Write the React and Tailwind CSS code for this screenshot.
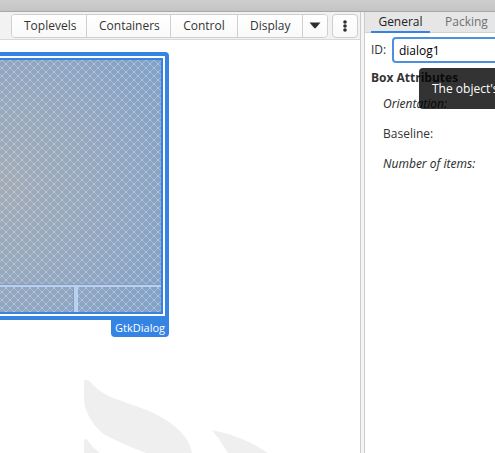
import React from "react";

const toolButton =
  "h-full border-r border-[#d0d0d0] px-3 text-[12px] leading-4 text-[#333] bg-linear-to-b from-white to-[#f9f9f9]";

function Toolbar() {
  return (
    <div className="flex h-7 shrink-0 items-center justify-end gap-1 border-b border-[#d9d9d9] bg-[#f2f2f2] pr-[2px]">
      <div className="flex h-6 overflow-hidden rounded-[4px] border border-[#cfcfcf]">
        <button className={toolButton + " w-[75px]"}>Toplevels</button>
        <button className={toolButton + " w-[84px]"}>Containers</button>
        <button className={toolButton + " w-[67px]"}>Control</button>
        <button className={toolButton + " w-[65px]"}>Display</button>
        <button
          aria-label="More categories"
          className="flex w-6 items-center justify-center bg-linear-to-b from-white to-[#f9f9f9]"
        >
          <svg width="12" height="7" viewBox="0 0 12 7">
            <path d="M0.5 0.5h11L7 5.7q-1 1-2 0z" fill="#2e2e2e" />
          </svg>
        </button>
      </div>
      <button
        aria-label="Menu"
        className="flex h-6 w-[26px] items-center justify-center rounded-[4px] border border-[#cfcfcf] bg-linear-to-b from-white to-[#f9f9f9]"
      >
        <svg width="4" height="12" viewBox="0 0 4 12" fill="#2e2e2e">
          <circle cx="2" cy="2" r="1.8" />
          <circle cx="2" cy="6" r="1.8" />
          <circle cx="2" cy="10" r="1.8" />
        </svg>
      </button>
    </div>
  );
}

function Hatch() {
  return (
    <svg className="block h-full w-full" aria-hidden="true">
      <defs>
        <radialGradient id="glow" gradientUnits="userSpaceOnUse" cx="0" cy="125" r="210">
          <stop offset="0" stopColor="#a5abb3" />
          <stop offset="0.5" stopColor="#95a7be" />
          <stop offset="1" stopColor="#82a0c8" />
        </radialGradient>
        <pattern id="hatch" width="8" height="8" patternUnits="userSpaceOnUse" x="2" y="0">
          <path
            d="M-1 -1L9 9M9 -1L-1 9"
            stroke="#c4daf0"
            strokeOpacity="0.46"
            strokeWidth="1"
          />
          <path d="M3 3h2v2h-2zM-1 -1h2v2h-2zM7 -1h2v2h-2zM-1 7h2v2h-2zM7 7h2v2h-2z" fill="#c4daf0" fillOpacity="0.25" />
        </pattern>
      </defs>
      <rect width="100%" height="100%" fill="url(#glow)" />
      <rect width="100%" height="100%" fill="url(#hatch)" />
    </svg>
  );
}

function Canvas() {
  return (
    <div className="relative min-h-0 flex-1 overflow-hidden bg-white pt-3">
      <div className="w-[169px] rounded-tr-[4px] bg-[#3584e4] py-1 pr-1">
        <div className="bg-white py-[2px] pr-[2px]">
          <div className="border-y-2 border-r-2 border-[#3584e4]">
            <div className="relative h-[252px]">
              <Hatch />
              <div className="absolute inset-x-0 bottom-0 flex h-7 flex-col">
                <div className="h-[3px] border-t border-[#849dbc] bg-[#b9d1f0]" />
                <div className="flex flex-1">
                  <div className="w-[73px]" />
                  <div className="w-[5px] border-l border-[#849dbc] bg-[#b9d1f0]" />
                </div>
              </div>
            </div>
          </div>
        </div>
      </div>
      <div className="flex w-[169px] justify-end">
        <span className="h-[17px] rounded-b-[4px] bg-[#3584e4] px-1 text-[11px] leading-4 text-white">
          GtkDialog
        </span>
      </div>
      <svg
        className="absolute bottom-0 left-[60px]"
        width="260"
        height="93"
        viewBox="0 0 260 93"
        fill="#efefef"
        aria-hidden="true"
      >
        <path d="M24 21Q24 19 26 20Q30 20 32 24Q40 33 56 39L84 49C110 59 130 76 132 93H86C70 87 57 81 45 75Q33 67 26 50Q24 45 24 35Z" />
        <path d="M24 93V82Q25 76 28 81Q32 87 40 93Z" />
        <path d="M152 70Q183 76 208 93H168Q161 81 152 70Z" />
      </svg>
    </div>
  );
}

function Inspector() {
  return (
    <aside className="relative w-[130px] shrink-0 overflow-hidden bg-white">
      <nav className="flex h-[21px] border-b border-[#d2d2d2] bg-[#e6e6e6] pl-[6px] whitespace-nowrap">
        <button className="h-[21px] w-[59px] shrink-0 border-b-2 border-[#3584e4] text-[12px] leading-4 text-[#222]">
          General
        </button>
        <button className="ml-[15px] h-[21px] shrink-0 pb-[2px] text-[12px] leading-4 text-[#707070]">
          Packing
        </button>
      </nav>
      <div className="flex h-[34px] items-center pl-[6px]">
        <label htmlFor="object-id" className="w-[21px] shrink-0">
          ID:
        </label>
        <input
          id="object-id"
          defaultValue="dialog1"
          className="h-[26px] w-[200px] shrink-0 rounded-[4px] border-2 border-[#4d8fe0] bg-white px-[5px] text-black outline-none"
        />
      </div>
      <div className="pl-[6px]">
        <h2 className="h-5 leading-[22px] font-bold">Box Attributes</h2>
        <div className="pl-3 whitespace-nowrap">
          <p className="h-[30px] font-['Noto_Sans',sans-serif] leading-[34px] italic">Orientation:</p>
          <p className="h-[30px] leading-[34px]">Baseline:</p>
          <p className="h-[30px] font-['Noto_Sans',sans-serif] leading-[34px] italic">Number of items:</p>
        </div>
      </div>
      <div
        role="tooltip"
        className="absolute top-14 left-[54px] h-[41px] w-[240px] rounded-[4px] bg-black/80 px-[13px] leading-[42px] whitespace-nowrap text-white"
      >
        The object's
      </div>
    </aside>
  );
}

export default function App() {
  return (
    <div className="flex h-screen flex-col overflow-hidden bg-white font-['Open_Sans',sans-serif] text-[12px] leading-4 text-[#333]">
      <header className="h-3 shrink-0 border-b border-[#a8a8a8] bg-linear-to-b from-[#cecece] to-[#c4c4c4]" />
      <div className="flex min-h-0 flex-1">
        <main className="flex min-w-0 flex-1 flex-col">
          <Toolbar />
          <Canvas />
        </main>
        <div className="w-[5px] shrink-0 border-x border-[#cbcbcb] bg-[#f5f5f5]" />
        <Inspector />
      </div>
    </div>
  );
}
